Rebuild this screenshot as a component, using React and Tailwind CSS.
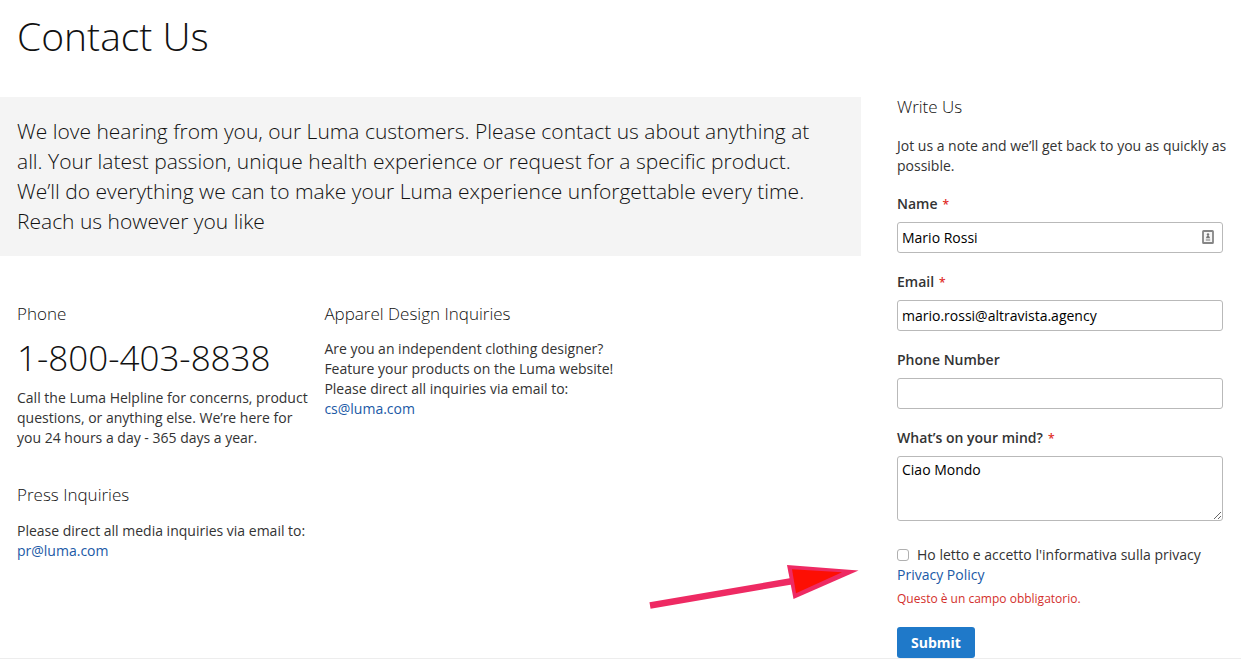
import React, { useState } from "react";

const INPUT =
  "block w-full rounded-[3px] border border-[#b9b9b9] bg-white px-1 text-sm text-black outline-none focus:border-[#1979c3]";

const Required = () => <span className="ml-[5px] text-xs text-[#e02b27]">*</span>;

const Field = ({ id, label, required, children }) => (
  <div className="mb-[19px]">
    <label htmlFor={id} className="mb-2 block h-5 text-sm leading-5 font-semibold">
      {label}
      {required && <Required />}
    </label>
    {children}
  </div>
);

const Title = ({ children }) => <h2 className="text-[17px] leading-5 font-light text-[#111]">{children}</h2>;

const ContactCardIcon = () => (
  <svg viewBox="0 0 12 14" className="h-[14px] w-3">
    <rect x="1" y="1" width="10" height="12" rx="0.6" fill="#f6f6f6" stroke="#858585" strokeWidth="1.8" />
    <circle cx="6" cy="4.4" r="1.2" fill="#777" />
    <path d="M3.8 8.2 5.2 5.4h1.6l1.4 2.8z" fill="#777" />
    <path d="M3.8 10h4.4" stroke="#777" strokeWidth="1" />
  </svg>
);

const Arrow = () => (
  <svg
    viewBox="0 0 212 50"
    className="pointer-events-none absolute right-0 bottom-[46px] h-[50px] w-[212px]"
    aria-hidden="true"
  >
    <path d="M1 43.5 144 19" stroke="#ee2a63" strokeWidth="6.5" />
    <path d="M138 3 209.5 8.5 144.5 37z" fill="#ee2a63" />
    <path d="M143 7.2 193 10.3 147 31.3z" fill="#fd0f04" />
  </svg>
);

const ContactForm = () => {
  const [form, setForm] = useState({
    name: "Mario Rossi",
    email: "mario.rossi@altravista.agency",
    phone: "",
    comment: "Ciao Mondo",
  });
  const [accepted, setAccepted] = useState(false);

  const update = (e) => setForm({ ...form, [e.target.name]: e.target.value });

  return (
    <form onSubmit={(e) => e.preventDefault()}>
      <Title>Write Us</Title>
      <p className="-mr-2 mt-[19px] mb-[18px] text-sm leading-5">
        Jot us a note and we’ll get back to you as quickly as possible.
      </p>

      <Field id="name" label="Name" required>
        <div className="relative">
          <input id="name" name="name" value={form.name} onChange={update} className={`${INPUT} h-[31px]`} />
          <span className="absolute top-2 right-[9px]">
            <ContactCardIcon />
          </span>
        </div>
      </Field>
      <Field id="email" label="Email" required>
        <input id="email" name="email" type="email" value={form.email} onChange={update} className={`${INPUT} h-[31px]`} />
      </Field>
      <Field id="phone" label="Phone Number">
        <input id="phone" name="phone" type="tel" value={form.phone} onChange={update} className={`${INPUT} h-[31px]`} />
      </Field>
      <Field id="comment" label="What’s on your mind?" required>
        <textarea
          id="comment"
          name="comment"
          value={form.comment}
          onChange={update}
          className={`${INPUT} h-[65px] resize-y py-[3px] leading-5`}
        />
      </Field>

      <div className="mt-6 text-sm leading-5">
        <label className="flex items-center">
          <input
            type="checkbox"
            checked={accepted}
            onChange={(e) => setAccepted(e.target.checked)}
            className="mr-2 h-3 w-3 appearance-none rounded-[3px] border border-[#b0b0b0] bg-white checked:bg-[#1979c3]"
          />
          Ho letto e accetto l'informativa sulla privacy
        </label>
        <a href="#privacy" className="block text-[#2059a6]">
          Privacy Policy
        </a>
      </div>
      {!accepted && <p className="mt-[6px] text-xs leading-4 text-[#d3302c]">Questo è un campo obbligatorio.</p>}

      <button
        type="submit"
        className="mt-5 block h-[31px] rounded-[3px] bg-[#1f79c9] px-[14px] text-sm font-bold text-white hover:bg-[#006bb4]"
      >
        Submit
      </button>
    </form>
  );
};

export default function App() {
  return (
    <div className="border-b border-[#ededed] bg-white font-['Open_Sans','Noto_Sans',sans-serif] text-[#333]">
      <h1 className="px-[17px] pt-[11px] pb-9 text-[39px] leading-[50px] font-light text-[#111]">Contact Us</h1>

      <div className="flex gap-9 pr-[18px]">
        <main className="relative min-w-0 flex-1">
          <p className="bg-[#f4f4f4] pt-[19px] pr-10 pb-5 pl-[17px] text-[21px] leading-[30px] font-light text-[#111]">
            We love hearing from you, our Luma customers. Please contact us about anything at all. Your latest
            passion, unique health experience or request for a specific product. We’ll do everything we can to make
            your Luma experience unforgettable every time. Reach us however you like
          </p>

          <div className="flex gap-3 pt-12 pl-[17px] text-sm leading-5">
            <div className="w-[35%]">
              <section>
                <Title>Phone</Title>
                <p className="mt-[11px] text-[35px] leading-[45px] font-light text-[#111]">1-800-403-8838</p>
                <p className="mt-2">
                  Call the Luma Helpline for concerns, product questions, or anything else. We’re here for you 24
                  hours a day - 365 days a year.
                </p>
              </section>
              <section className="mt-[37px]">
                <Title>Press Inquiries</Title>
                <p className="mt-4">Please direct all media inquiries via email to:</p>
                <a href="mailto:pr@luma.com" className="text-[#2059a6]">
                  pr@luma.com
                </a>
              </section>
            </div>
            <section className="w-[35%]">
              <Title>Apparel Design Inquiries</Title>
              <p className="mt-[15px]">
                Are you an independent clothing designer? Feature your products on the Luma website! Please direct
                all inquiries via email to:
              </p>
              <a href="mailto:cs@luma.com" className="text-[#2059a6]">
                cs@luma.com
              </a>
            </section>
          </div>

          <Arrow />
        </main>

        <aside className="w-[326px] shrink-0">
          <ContactForm />
        </aside>
      </div>
    </div>
  );
}
